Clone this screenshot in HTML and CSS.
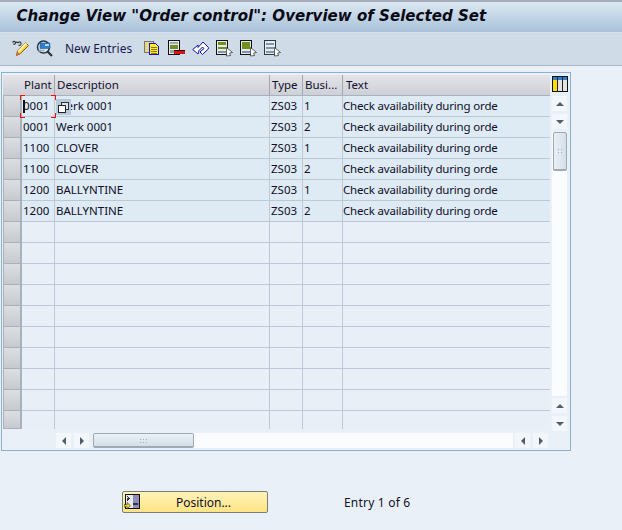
FILE: index.html
```html
<!DOCTYPE html>
<html lang="en">
<head>
<meta charset="utf-8">
<title>Order control</title>
<link rel="stylesheet" href="styles.css">
</head>
<body>
<header class="title"><h1>Change View "Order control": Overview of Selected Set</h1></header>
<nav class="toolbar">
  <svg class="ic" viewBox="0 0 17 17"><path d="M.5 2.500c1-1.500 2.500-1.500 3 0s-1.500 2.500-2 1M3.500 2.500c1-.5 2-.5 2.500.5M6 3c.5-1.500 2.500-1.500 3 0s-1 3-2.500 2" fill="none" stroke="#333" stroke-width="1.100"/><path d="M4.500 15.500l1-4.500 8-8.500 3 3-8 8z" fill="#ffce3a" stroke="#8a5a10"/><path d="M5.500 11l8-8.500 1.500 1.500-8 8.500z" fill="#fff2a8"/><path d="M4.500 15.500l.8-3.500 2.700 2.300z" fill="#e8602a"/></svg>
  <svg class="ic" viewBox="0 0 17 17"><circle cx="7.500" cy="7" r="6" fill="#e6eef6" stroke="#2a3038" stroke-width="1.500"/><path d="M4 3h10v5.500H4z" fill="#2f7fd0" stroke="#16508c" stroke-width=".5"/><path d="M9 4h4v2H9z" fill="#bcd6ee"/><path d="M2.500 9.500h6v2h-6z" fill="#9fb4c6"/><path d="M11.500 11.500l4.500 4.500" stroke="#2a3038" stroke-width="2.200"/></svg>
  <span class="tool-text">New Entries</span>
  <svg class="ic" viewBox="0 0 17 17" shape-rendering="crispEdges"><path d="M.5 1.500h9v11h-9z" fill="#e6d780" stroke="#777"/><path d="M5.500 3.500h6l3 3v8h-9z" fill="#ffe838" stroke="#1414c8"/><path d="M7 7h6M7 9h6M7 11h6M7 13h6" stroke="#887a10"/></svg>
  <svg class="ic" viewBox="0 0 17 17" shape-rendering="crispEdges"><path d="M.5.5h11v14H.5z" fill="#e4e8ec" stroke="#111"/><path d="M2 2h8v2H2zM2 10h5v3H2z" fill="#9aa8b4"/><path d="M2 5h8v4H2z" fill="#6f8f20"/><path d="M6 10h11v1H6z" fill="#111"/><path d="M6 11h11v3H6z" fill="#e01010"/></svg>
  <svg class="ic" viewBox="0 0 17 17"><path d="M.7 9.500L6 5v2.500l5-5.500 5.300 5.300v1.700L10.500 14.500 8 12l4-3.500L10.500 7 7 10.500 6 14z" fill="#fff" stroke="#1414a8" stroke-width="1" stroke-linejoin="round"/></svg>
  <svg class="ic" viewBox="0 0 17 17" shape-rendering="crispEdges"><path d="M.5.5h11v14H.5z" fill="#e4e8ec" stroke="#111"/><path d="M2 2h8v3H2zM2 7h8v2H2z" fill="#6f8f20"/><path d="M2 11h8v2H2z" fill="#7f98a8"/><path d="M10.500 7.500l6 5-2.800.5 .8 2.500-4 .5z" fill="#fff" stroke="#222" stroke-width=".7" shape-rendering="auto"/></svg>
  <svg class="ic" viewBox="0 0 17 17" shape-rendering="crispEdges"><path d="M.5.5h11v14H.5z" fill="#e4e8ec" stroke="#111"/><path d="M2 2h8v7H2z" fill="#6f8f20"/><path d="M2 11h8v2H2z" fill="#7f98a8"/><path d="M10.500 7.500l6 5-2.800.5 .8 2.500-4 .5z" fill="#fff" stroke="#222" stroke-width=".7" shape-rendering="auto"/></svg>
  <svg class="ic" viewBox="0 0 17 17" shape-rendering="crispEdges"><path d="M.5.5h11v14H.5z" fill="#e8ecf0" stroke="#2a3a48"/><path d="M2 3h8v2H2zM2 7h8v2H2zM2 11h8v2H2z" fill="#7f98a8"/><path d="M10.500 7.500l6 5-2.800.5 .8 2.500-4 .5z" fill="#fff" stroke="#222" stroke-width=".7" shape-rendering="auto"/></svg>
</nav>
<main class="panel">
  <div class="grid">
    <div class="row head"><div class="sel"></div><div class="c">Plant</div><div class="c">Description</div><div class="c">Type</div><div class="c">Busi...</div><div class="c">Text</div></div>
    <div class="row data"><div class="sel"></div><div class="c current"><i class="caret"></i>0001</div><div class="c">Werk 0001</div><div class="c">ZS03</div><div class="c">1</div><div class="c">Check availability during orde</div></div>
    <div class="row data"><div class="sel"></div><div class="c">0001</div><div class="c">Werk 0001</div><div class="c">ZS03</div><div class="c">2</div><div class="c">Check availability during orde</div></div>
    <div class="row data"><div class="sel"></div><div class="c">1100</div><div class="c">CLOVER</div><div class="c">ZS03</div><div class="c">1</div><div class="c">Check availability during orde</div></div>
    <div class="row data"><div class="sel"></div><div class="c">1100</div><div class="c">CLOVER</div><div class="c">ZS03</div><div class="c">2</div><div class="c">Check availability during orde</div></div>
    <div class="row data"><div class="sel"></div><div class="c">1200</div><div class="c">BALLYNTINE</div><div class="c">ZS03</div><div class="c">1</div><div class="c">Check availability during orde</div></div>
    <div class="row data"><div class="sel"></div><div class="c">1200</div><div class="c">BALLYNTINE</div><div class="c">ZS03</div><div class="c">2</div><div class="c">Check availability during orde</div></div>
    <div class="row"><div class="sel"></div><div class="c"></div><div class="c"></div><div class="c"></div><div class="c"></div><div class="c"></div></div>
    <div class="row"><div class="sel"></div><div class="c"></div><div class="c"></div><div class="c"></div><div class="c"></div><div class="c"></div></div>
    <div class="row"><div class="sel"></div><div class="c"></div><div class="c"></div><div class="c"></div><div class="c"></div><div class="c"></div></div>
    <div class="row"><div class="sel"></div><div class="c"></div><div class="c"></div><div class="c"></div><div class="c"></div><div class="c"></div></div>
    <div class="row"><div class="sel"></div><div class="c"></div><div class="c"></div><div class="c"></div><div class="c"></div><div class="c"></div></div>
    <div class="row"><div class="sel"></div><div class="c"></div><div class="c"></div><div class="c"></div><div class="c"></div><div class="c"></div></div>
    <div class="row"><div class="sel"></div><div class="c"></div><div class="c"></div><div class="c"></div><div class="c"></div><div class="c"></div></div>
    <div class="row"><div class="sel"></div><div class="c"></div><div class="c"></div><div class="c"></div><div class="c"></div><div class="c"></div></div>
    <div class="row"><div class="sel"></div><div class="c"></div><div class="c"></div><div class="c"></div><div class="c"></div><div class="c"></div></div>
    <div class="row last"><div class="sel"></div><div class="c"></div><div class="c"></div><div class="c"></div><div class="c"></div><div class="c"></div></div>
    <div class="focus"><i class="fc tl"></i><i class="fc tr"></i><i class="fc bl"></i><i class="fc br"></i></div>
    <div class="copy"><svg viewBox="0 0 11 11" width="11" height="11" shape-rendering="crispEdges"><path d="M3.500.5h7v7h-7z" fill="#dde4ea" stroke="#333"/><path d="M.5 3.500h7v7h-7z" fill="#fff" stroke="#222"/></svg></div>
  </div>
  <div class="vbar">
    <svg class="corner" viewBox="0 0 16 16" shape-rendering="crispEdges"><path d="M.5.5h15v15H.5z" fill="#fff" stroke="#111"/><path d="M1 1h14v3H1z" fill="#2f7fd0"/><path d="M1 4h4v11H1z" fill="#ffe000"/><path d="M6 4h4v11H6zM11 4h4v11h-4z" fill="#e4e4e4"/><path d="M5.500 1v14M10.500 1v14" stroke="#222"/></svg>
    <button class="sb up"><i class="tri t-up"></i></button>
    <button class="sb dn"><i class="tri t-dn"></i></button>
    <div class="vtrack"><div class="vthumb"><i class="grip"></i></div></div>
    <button class="sb up"><i class="tri t-up"></i></button>
    <button class="sb dn"><i class="tri t-dn"></i></button>
  </div>
  <div class="hbar">
    <button class="sb"><i class="tri t-lf"></i></button>
    <button class="sb"><i class="tri t-rt"></i></button>
    <div class="htrack"><div class="hthumb"><i class="grip"></i></div></div>
    <button class="sb"><i class="tri t-lf"></i></button>
    <button class="sb"><i class="tri t-rt"></i></button>
  </div>
</main>
<footer class="foot">
  <button class="pos">
    <svg class="pos-ic" viewBox="0 0 15 15" shape-rendering="crispEdges"><path d="M1.500.5h13v13h-13z" fill="#e8ecf0" stroke="#111"/><path d="M8 1h6v12H8z" fill="#8e8eb8"/><path d="M9 9h4v1H9zM3 4h3M3 2l2 2-2 2" stroke="#334" fill="none"/><path d="M0 10h3V8l3 3-3 3v-2H0z" fill="#ffe000" stroke="#222" stroke-width=".6" shape-rendering="auto"/></svg>
    <span>Position...</span>
  </button>
  <span class="entry">Entry 1 of 6</span>
</footer>
</body>
</html>
```

FILE: styles.css
```css
* { box-sizing: border-box; }
html, body { margin: 0; height: 100%; }
body {
  background: #e9f0f7;
  font-family: "Noto Sans", sans-serif;
  font-size: 12px;
  color: #10102a;
  overflow: hidden;
}
.title {
  height: 33px;
  border-top: 2px solid #a4adba;
  border-bottom: 1px solid #d4e0ea;
  background: linear-gradient(#dbe8f2, #a8c1d9);
  padding: 0 0 2px 16.500px;
  display: flex;
  align-items: center;
}
.title h1 {
  margin: 0;
  font-family: "DejaVu Sans", sans-serif;
  font-size: 15.070px;
  font-weight: bold;
  font-style: italic;
  color: #0a0a14;
  white-space: nowrap;
}
.toolbar {
  height: 33px;
  background: #cfdce8;
  border-bottom: 1px solid #a6b6c6;
  display: flex;
  align-items: center;
  padding: 0 0 2px 12px;
}
.ic { width: 17px; height: 17px; flex: none; margin-right: 7px; }
.tool-text { width: 66px; margin: 0 13px 0 5px; font-size: 12px; color: #1a1a50; white-space: nowrap; }

.panel {
  margin: 6px 0 0 1px;
  width: 570px;
  height: 379px;
  border: 1px solid #8fb0cc;
  padding: 2px 0 0 1px;
  display: grid;
  grid-template-columns: 548px 1fr;
  grid-template-rows: 356px 1fr;
}
.grid { position: relative; }
.row {
  display: grid;
  grid-template-columns: 19px 33px 215px 33px 40px 207px;
  height: 21px;
  background: none;
}
.row > .c { background: #e8eff6; }
.row.data > .c { background: #deeaf4; }
.row.last { height: 18px; }
.sel {
  background: linear-gradient(#dcdee2, #c6cad0);
  border-right: 2px solid #a9b1bb;
  border-left: 1px solid #a9b1bb;
  border-bottom: 1px solid #a9b1bb;
}
.c {
  border-right: 1px solid #bcc8d6;
  border-bottom: 1px solid #bcc8d6;
  padding: 0 0 0 1px;
  line-height: 20px;
  font-size: 11.500px;
  white-space: nowrap;
  overflow: hidden;
}
.data .c:last-child { padding-left: 0; letter-spacing: -.17px; }
.row:not(.head) .c:last-child { border-right: 0; }
.row.last .c { border-bottom: 0; }
.head .sel { background: linear-gradient(#e4e4e8, #cdd0d6); border: 0; border-bottom: 1px solid #a9b1bb; }
.row.head > .c {
  background: linear-gradient(#e4e4e8, #cdd0d6);
  border-right: 1px solid #9fa9b6;
  border-bottom: 1px solid #a9b1bb;
  padding-left: 2px;
}
.row.head > .c:last-child { border-right: 0; padding-left: 3px; }
.current { position: relative; }
.caret { position: absolute; left: 1px; top: 4px; width: 2px; height: 13px; background: #111; }
.focus { position: absolute; left: 17px; top: 20px; width: 36px; height: 23px; }
.fc { position: absolute; width: 5px; height: 5px; border: 0 solid #f01010; }
.tl { left: 0; top: 0; border-width: 1px 0 0 1px; }
.tr { right: 0; top: 0; border-width: 1px 1px 0 0; }
.bl { left: 0; bottom: 0; border-width: 0 0 1px 1px; }
.br { right: 0; bottom: 0; border-width: 0 1px 1px 0; }
.copy {
  position: absolute;
  left: 53px;
  top: 24px;
  width: 15px;
  height: 16px;
  background: #b9c8da;
  display: flex;
  align-items: center;
  justify-content: center;
}
.vbar { display: flex; flex-direction: column; align-items: flex-start; padding: 1px 0 0 1px; }
.corner { width: 16px; height: 16px; margin-bottom: 4px; }
.sb {
  width: 15px;
  height: 15px;
  flex: none;
  border: 0;
  padding: 0;
  background: #f3f6fa;
  display: flex;
  align-items: center;
  justify-content: center;
}
.vbar .dn { margin-top: 3px; }
.tri { width: 0; height: 0; border: 4px solid transparent; }
.t-up { border-top: 0; border-bottom: 4px solid #4e5e6e; }
.t-dn { border-bottom: 0; border-top: 4px solid #4e5e6e; }
.t-lf { border-left: 0; border-right: 4px solid #4e5e6e; }
.t-rt { border-right: 0; border-left: 4px solid #4e5e6e; }
.vtrack { width: 15px; flex: 1; margin: 3px 0 2px; background: #fbfcfd; }
.vthumb {
  width: 14px;
  height: 39px;
  margin-left: 1px;
  border: 1px solid #a0a8b0;
  border-bottom-width: 2px;
  border-radius: 2px;
  background: linear-gradient(90deg, #eaf1f7, #d2dfe9);
  display: flex;
  align-items: center;
  justify-content: center;
}
.grip {
  display: block;
  width: 7px;
  height: 7px;
  background-image: radial-gradient(#a0abb6 .8px, transparent 1px);
  background-size: 3px 3px;
}
.hthumb .grip { width: 9px; height: 5px; }
.hbar {
  grid-column: 1 / -1;
  display: flex;
  gap: 3px;
  padding: 2px 0 0 53px;
  height: 18px;
}
.htrack { width: 420px; height: 15px; margin: 0 -1px 0 1px; background: #fbfcfd; }
.hthumb {
  width: 101px;
  height: 15px;
  border: 1px solid #a0a8b0;
  border-bottom-width: 2px;
  border-radius: 2px;
  background: linear-gradient(#eaf1f7, #d2dfe9);
  display: flex;
  align-items: center;
  justify-content: center;
}
.foot {
  display: flex;
  align-items: center;
  margin-top: 40px;
  padding-left: 122px;
}
.pos {
  width: 146px;
  height: 22px;
  border: 1px solid #7d7d78;
  border-radius: 2px;
  background: linear-gradient(#fff3b8, #ffe484);
  padding: 0 0 0 1px;
  display: flex;
  align-items: center;
  font: inherit;
  color: #10102a;
}
.pos-ic { width: 16px; height: 16px; flex: none; }
.pos span { flex: 1; text-align: center; padding-top: 1px; }
.entry { margin-left: 76px; white-space: nowrap; color: #10102a; padding-top: 1px; letter-spacing: .2px; }
```
